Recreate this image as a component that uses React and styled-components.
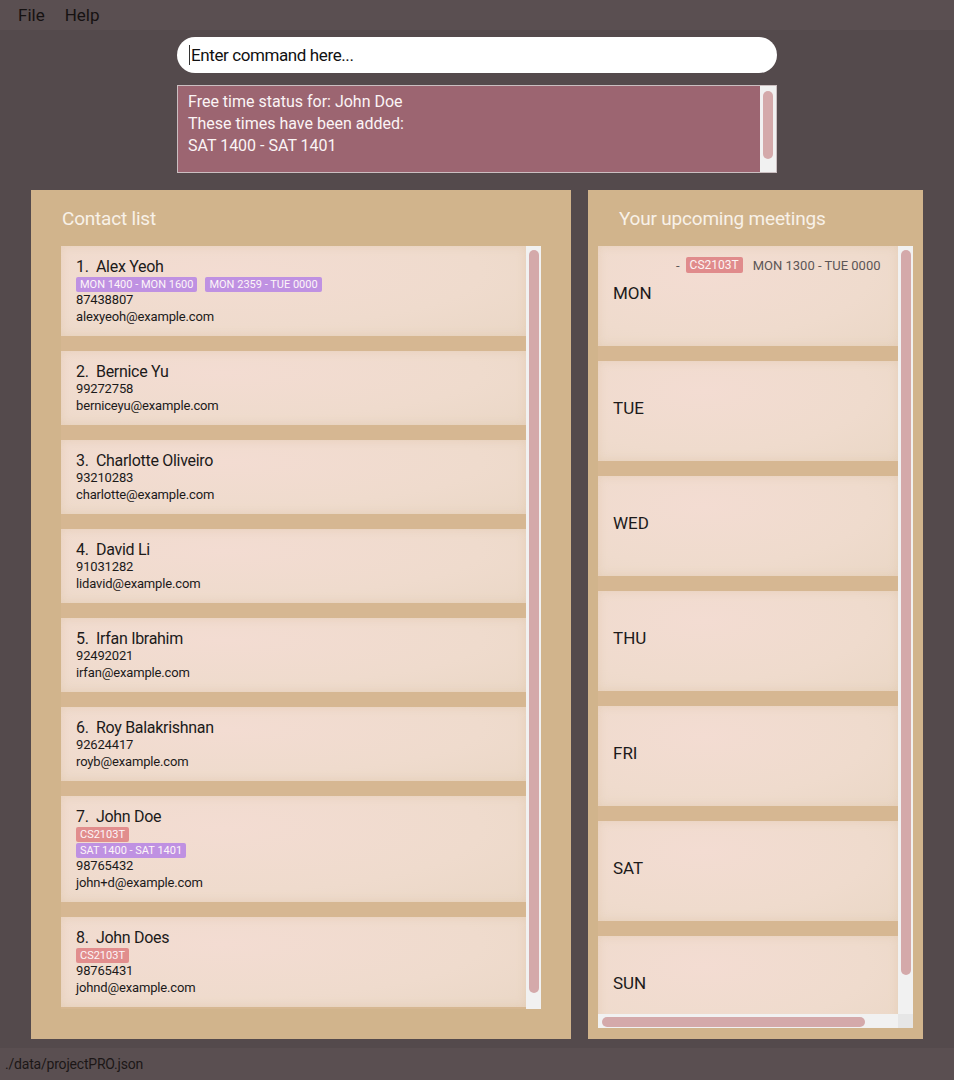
import React from "react";
import styled, { createGlobalStyle } from "styled-components";

const GlobalStyle = createGlobalStyle`
  html, body {
    margin: 0;
    padding: 0;
    background: #544a4c;
  }
  body {
    font-family: Roboto, Inter, "Liberation Sans", sans-serif;
  }
  * {
    box-sizing: border-box;
  }
`;

const Window = styled.div`
  width: 954px;
  height: 1080px;
  display: flex;
  flex-direction: column;
  background: #544a4c;
  overflow: hidden;
`;

const MenuBar = styled.div`
  height: 30px;
  background: #5a4f51;
  display: flex;
  align-items: center;
  gap: 20px;
  padding-left: 18px;
`;

const MenuItem = styled.span`
  font-size: 17px;
  color: #161212;
`;

const CommandArea = styled.div`
  width: 600px;
  margin: 7px auto 0;
  display: flex;
  flex-direction: column;
  gap: 12px;
`;

const CommandBox = styled.div`
  height: 36px;
  background: #ffffff;
  border-radius: 18px;
  display: flex;
  align-items: center;
  padding-left: 12px;
  font-size: 17px;
  color: #111;
  letter-spacing: -0.4px;
`;

const Caret = styled.span`
  width: 1px;
  height: 20px;
  background: #333;
  margin-right: 1px;
`;

const ResultBox = styled.div`
  height: 88px;
  background: #9c6571;
  border: 1px solid #cbbfc1;
  display: flex;
`;

const ResultText = styled.div`
  flex: 1;
  padding: 5px 10px;
  color: #fbf4f5;
  font-size: 16px;
  line-height: 22px;
`;

const VScroll = styled.div`
  width: ${(p) => p.$w || 15}px;
  background: #f1f1f1;
  padding: ${(p) => p.$pad || "4px 2px 0 3px"};
  flex-shrink: 0;
`;

const Thumb = styled.div`
  width: 10px;
  height: ${(p) => p.$h}px;
  background: #d4a9aa;
  border-radius: 5px;
`;

const Panels = styled.div`
  display: flex;
  gap: 17px;
  padding: 0 31px;
  margin-top: 17px;
  height: 849px;
`;

const Panel = styled.div`
  width: ${(p) => p.$w}px;
  background: #d1b48c;
  display: flex;
  flex-direction: column;
  padding: ${(p) => p.$pad};
`;

const PanelTitle = styled.div`
  height: 56px;
  display: flex;
  align-items: center;
  padding-left: ${(p) => p.$indent || 1}px;
  font-size: 19px;
  color: #f8f1e8;
  letter-spacing: -0.2px;
`;

const ListFrame = styled.div`
  flex: 1;
  display: flex;
  min-height: 0;
  background: #d6b792;
`;

const CardColumn = styled.div`
  flex: 1;
  display: flex;
  flex-direction: column;
  gap: 15px;
  overflow: hidden;
`;

const Card = styled.div`
  flex-shrink: 0;
  background: radial-gradient(ellipse at 35% 30%, #f3dcd2 0%, #efdbcd 60%, #ead7c6 100%);
  box-shadow: inset 0 0 10px rgba(214, 185, 150, 0.35);
  padding: 10px 15px 11px;
  display: flex;
  flex-direction: column;
  color: #1c1a1a;
`;

const Name = styled.div`
  font-size: 16px;
  line-height: 21px;
  letter-spacing: -0.3px;
  margin-bottom: -1px;
`;

const TagRow = styled.div`
  display: flex;
  gap: 8px;
  margin-top: 1px;
`;

const Tag = styled.span`
  height: 15px;
  padding: 0 4px;
  border-radius: 2px;
  background: ${(p) => (p.$kind === "time" ? "#bf91e2" : "#e18d8d")};
  color: #fdf6f8;
  font-size: 11px;
  line-height: 15px;
`;

const Detail = styled.div`
  font-size: 13px;
  line-height: ${(p) => p.$lh || 16}px;
  letter-spacing: -0.15px;
`;

const RightInner = styled.div`
  flex: 1;
  display: flex;
  flex-direction: column;
  min-height: 0;
`;

const RightBody = styled.div`
  flex: 1;
  display: flex;
  min-height: 0;
`;

const DayCard = styled(Card)`
  height: 100px;
  flex-direction: row;
  align-items: center;
  padding: 0 0 7px 15px;
`;

const DayLabel = styled.div`
  width: 63px;
  font-size: 17px;
  flex-shrink: 0;
`;

const Meetings = styled.div`
  align-self: flex-start;
  margin-top: 11px;
  display: flex;
  flex-direction: column;
`;

const MeetingRow = styled.div`
  display: flex;
  align-items: center;
  gap: 6px;
  font-size: 13px;
  color: #5c5656;
`;

const MeetingTag = styled.span`
  height: 16px;
  padding: 0 4px;
  border-radius: 2px;
  background: #e08b8c;
  color: #fdf3f3;
  font-size: 12px;
  line-height: 16px;
  margin-right: 4px;
`;

const HScrollRow = styled.div`
  height: 14px;
  display: flex;
  flex-shrink: 0;
`;

const HTrack = styled.div`
  flex: 1;
  background: #f1f1f1;
  padding: 3px 0 0 4px;
`;

const HThumb = styled.div`
  width: 263px;
  height: 10px;
  background: #d4a9aa;
  border-radius: 5px;
`;

const Corner = styled.div`
  width: 15px;
  background: #e6e6e6;
`;

const StatusBar = styled.div`
  margin-top: 9px;
  height: 32px;
  background: #5a4f51;
  display: flex;
  align-items: center;
  padding-left: 5px;
  font-size: 14px;
  color: #1c1717;
  letter-spacing: -0.2px;
`;

const contacts = [
  { name: "Alex Yeoh", times: ["MON 1400 - MON 1600", "MON 2359 - TUE 0000"], phone: "87438807", email: "alexyeoh@example.com" },
  { name: "Bernice Yu", phone: "99272758", email: "berniceyu@example.com" },
  { name: "Charlotte Oliveiro", phone: "93210283", email: "charlotte@example.com" },
  { name: "David Li", phone: "91031282", email: "lidavid@example.com" },
  { name: "Irfan Ibrahim", phone: "92492021", email: "irfan@example.com" },
  { name: "Roy Balakrishnan", phone: "92624417", email: "royb@example.com" },
  { name: "John Doe", groups: ["CS2103T"], times: ["SAT 1400 - SAT 1401"], phone: "98765432", email: "john+d@example.com" },
  { name: "John Does", groups: ["CS2103T"], phone: "98765431", email: "johnd@example.com" },
];

const days = ["MON", "TUE", "WED", "THU", "FRI", "SAT", "SUN"];

const ContactCard = ({ index, c }) => (
  <Card>
    <Name>
      {index}.&nbsp; {c.name}
    </Name>
    {c.groups && (
      <TagRow>
        {c.groups.map((g) => (
          <Tag key={g}>{g}</Tag>
        ))}
      </TagRow>
    )}
    {c.times && (
      <TagRow>
        {c.times.map((t) => (
          <Tag key={t} $kind="time">
            {t}
          </Tag>
        ))}
      </TagRow>
    )}
    <Detail>{c.phone}</Detail>
    <Detail $lh={17}>{c.email}</Detail>
  </Card>
);

const App = () => {
  return (
    <Window>
      <GlobalStyle />
      <MenuBar>
        <MenuItem>File</MenuItem>
        <MenuItem>Help</MenuItem>
      </MenuBar>

      <CommandArea>
        <CommandBox>
          <Caret />
          Enter command here...
        </CommandBox>
        <ResultBox>
          <ResultText>
            Free time status for: John Doe
            <br />
            These times have been added:
            <br />
            SAT 1400 - SAT 1401
          </ResultText>
          <VScroll $w={16} $pad="5px 3px 0 3px">
            <Thumb $h={68} />
          </VScroll>
        </ResultBox>
      </CommandArea>

      <Panels>
        <Panel $w={540} $pad="0 30px 30px 30px">
          <PanelTitle>Contact list</PanelTitle>
          <ListFrame>
            <CardColumn>
              {contacts.map((c, i) => (
                <ContactCard key={c.name} index={i + 1} c={c} />
              ))}
            </CardColumn>
            <VScroll>
              <Thumb $h={743} />
            </VScroll>
          </ListFrame>
        </Panel>

        <Panel $w={335} $pad="0 10px 11px 10px">
          <PanelTitle $indent={21}>Your upcoming meetings</PanelTitle>
          <RightInner>
            <RightBody>
              <ListFrame>
                <CardColumn>
                  {days.map((d) => (
                    <DayCard key={d}>
                      <DayLabel>{d}</DayLabel>
                      {d === "MON" && (
                        <Meetings>
                          <MeetingRow>
                            -<MeetingTag>CS2103T</MeetingTag>MON 1300 - TUE 0000
                          </MeetingRow>
                        </Meetings>
                      )}
                    </DayCard>
                  ))}
                </CardColumn>
                <VScroll>
                  <Thumb $h={725} />
                </VScroll>
              </ListFrame>
            </RightBody>
            <HScrollRow>
              <HTrack>
                <HThumb />
              </HTrack>
              <Corner />
            </HScrollRow>
          </RightInner>
        </Panel>
      </Panels>

      <StatusBar>./data/projectPRO.json</StatusBar>
    </Window>
  );
};

export default App;
